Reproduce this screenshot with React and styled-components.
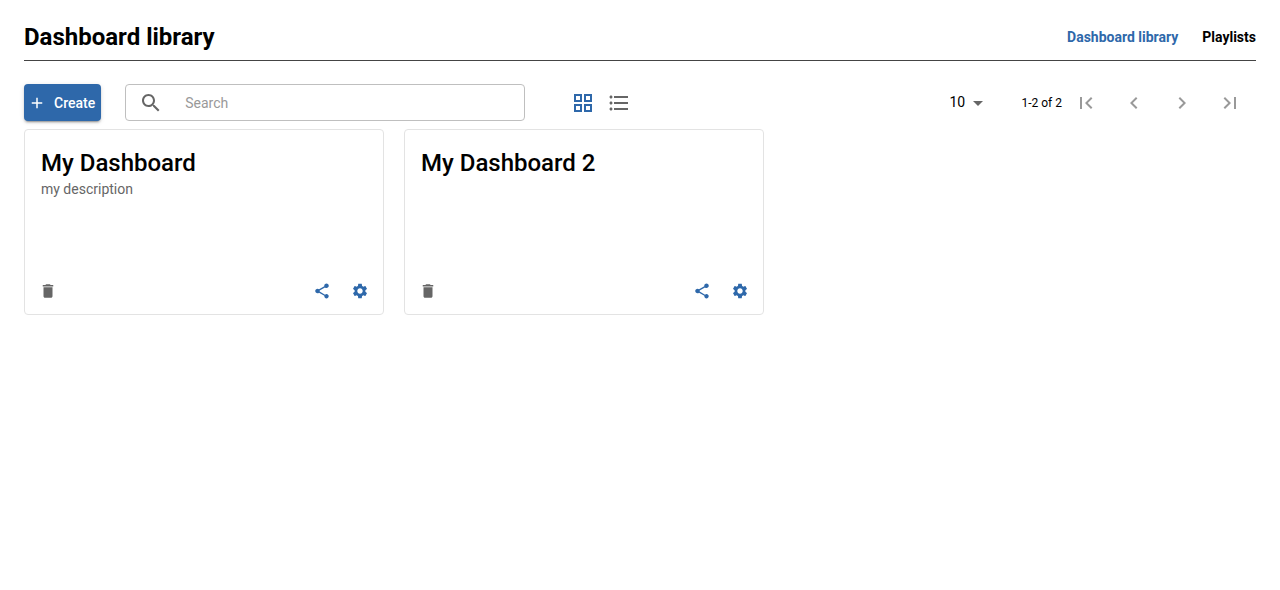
import React from "react";
import styled, { createGlobalStyle } from "styled-components";

const GlobalStyle = createGlobalStyle`
  *, *::before, *::after { box-sizing: border-box; }
  body {
    margin: 0;
    background: #fff;
    color: #000;
    font-family: Roboto, "Liberation Sans", sans-serif;
    font-size: 14px;
  }
  button, input, select { font: inherit; }
`;

const blue = "#2e68aa";
const gray = "#666";

const paths = {
  add: "M19 13h-6v6h-2v-6H5v-2h6V5h2v6h6v2z",
  search:
    "M15.5 14h-.79l-.28-.27C15.41 12.59 16 11.11 16 9.5 16 5.91 13.09 3 9.5 3S3 5.91 3 9.5 5.91 16 9.5 16c1.61 0 3.09-.59 4.23-1.57l.27.28v.79l5 4.99L20.49 19l-4.99-5zm-6 0C7.01 14 5 11.99 5 9.5S7.01 5 9.5 5 14 7.01 14 9.5 11.99 14 9.5 14z",
  grid: "M3 3v8h8V3H3zm6 6H5V5h4v4zm-6 4v8h8v-8H3zm6 6H5v-4h4v4zm4-16v8h8V3h-8zm6 6h-4V5h4v4zm-6 4v8h8v-8h-8zm6 6h-4v-4h4v4z",
  list: "M4 10.5c-.83 0-1.5.67-1.5 1.5s.67 1.5 1.5 1.5 1.5-.67 1.5-1.5-.67-1.5-1.5-1.5zm0-6c-.83 0-1.5.67-1.5 1.5S3.17 7.5 4 7.5 5.5 6.83 5.5 6 4.83 4.5 4 4.5zm0 12c-.83 0-1.5.68-1.5 1.5s.68 1.5 1.5 1.5 1.5-.68 1.5-1.5-.67-1.5-1.5-1.5zM7 19h14v-2H7v2zm0-6h14v-2H7v2zm0-8v2h14V5H7z",
  dropDown: "m7 10 5 5 5-5z",
  first: "M18.41 16.59 13.82 12l4.59-4.59L17 6l-6 6 6 6zM6 6h2v12H6z",
  previous: "M15.41 7.41 14 6l-6 6 6 6 1.41-1.41L10.83 12z",
  next: "M10 6 8.59 7.41 13.17 12l-4.58 4.59L10 18l6-6z",
  last: "M5.59 7.41 10.18 12l-4.59 4.59L7 18l6-6-6-6zM16 6h2v12h-2z",
  trash: "M6 19c0 1.1.9 2 2 2h8c1.1 0 2-.9 2-2V7H6v12zM19 4h-3.5l-1-1h-5l-1 1H5v2h14V4z",
  share:
    "M18 16.08c-.76 0-1.44.3-1.96.77L8.91 12.7c.05-.23.09-.46.09-.7s-.04-.47-.09-.7l7.05-4.11c.54.5 1.25.81 2.04.81 1.66 0 3-1.34 3-3s-1.34-3-3-3-3 1.34-3 3c0 .24.04.47.09.7L8.04 9.81C7.5 9.31 6.79 9 6 9c-1.66 0-3 1.34-3 3s1.34 3 3 3c.79 0 1.5-.31 2.04-.81l7.12 4.16c-.05.21-.08.43-.08.65 0 1.61 1.31 2.92 2.92 2.92s2.92-1.31 2.92-2.92-1.31-2.92-2.92-2.92z",
  settings:
    "M19.14 12.94c.04-.3.06-.61.06-.94 0-.32-.02-.64-.07-.94l2.03-1.58c.18-.14.23-.41.12-.61l-1.92-3.32c-.12-.22-.37-.29-.59-.22l-2.39.96c-.5-.38-1.03-.7-1.62-.94l-.36-2.54c-.04-.24-.24-.41-.48-.41h-3.84c-.24 0-.43.17-.47.41l-.36 2.54c-.59.24-1.13.57-1.62.94l-2.39-.96c-.22-.08-.47 0-.59.22L2.74 8.87c-.12.21-.08.47.12.61l2.03 1.58c-.05.3-.09.63-.09.94s.02.64.07.94l-2.03 1.58c-.18.14-.23.41-.12.61l1.92 3.32c.12.22.37.29.59.22l2.39-.96c.5.38 1.03.7 1.62.94l.36 2.54c.05.24.24.41.48.41h3.84c.24 0 .44-.17.47-.41l.36-2.54c.59-.24 1.13-.56 1.62-.94l2.39.96c.22.08.47 0 .59-.22l1.92-3.32c.12-.22.07-.47-.12-.61l-2.01-1.58zM12 15.6c-1.98 0-3.6-1.62-3.6-3.6s1.62-3.6 3.6-3.6 3.6 1.62 3.6 3.6-1.62 3.6-3.6 3.6z",
};

const Svg = styled.svg`
  display: block;
  flex: none;
  fill: currentColor;
`;

function Icon({ name, size = 24 }) {
  return (
    <Svg viewBox="0 0 24 24" width={size} height={size} aria-hidden="true">
      <path d={paths[name]} />
    </Svg>
  );
}

const Page = styled.div`
  padding: 20px 24px;
`;

const Header = styled.header`
  display: flex;
  align-items: center;
  justify-content: space-between;
  height: 41px;
  padding-bottom: 6px;
  border-bottom: 1px solid #444;
`;

const Title = styled.h1`
  margin: 0;
  font-size: 24px;
  line-height: 32px;
  font-weight: 700;
`;

const Nav = styled.nav`
  display: flex;
  gap: 24px;
`;

const NavLink = styled.a`
  color: ${(p) => (p.$active ? blue : "#000")};
  font-weight: 700;
  line-height: 20px;
  text-decoration: none;
`;

const Toolbar = styled.div`
  display: flex;
  align-items: center;
  margin: 23px 0 8px;
`;

const CreateButton = styled.button`
  display: flex;
  align-items: center;
  gap: 8px;
  height: 37px;
  padding: 0 6px 0 4px;
  border: 0;
  border-radius: 4px;
  background: ${blue};
  color: #fff;
  font-weight: 500;
  box-shadow: 0 3px 1px -2px rgba(0, 0, 0, 0.2), 0 2px 2px 0 rgba(0, 0, 0, 0.14),
    0 1px 5px 0 rgba(0, 0, 0, 0.12);
  cursor: pointer;
`;

const SearchBox = styled.label`
  display: flex;
  align-items: center;
  flex: 0 1 400px;
  height: 37px;
  margin-left: 24px;
  padding: 0 13px;
  gap: 22px;
  border: 1px solid #bfbfbf;
  border-radius: 4px;
  color: ${gray};
`;

const SearchInput = styled.input`
  flex: 1;
  min-width: 0;
  padding: 0;
  border: 0;
  outline: 0;
  background: none;
  color: #000;
  &::placeholder {
    color: #999;
    opacity: 1;
  }
`;

const IconButton = styled.button`
  display: flex;
  align-items: center;
  justify-content: center;
  width: ${(p) => p.$size}px;
  height: ${(p) => p.$size}px;
  padding: 0;
  border: 0;
  background: none;
  color: ${(p) => p.$color};
  cursor: pointer;
`;

const ViewModes = styled.div`
  display: flex;
  margin-left: 40px;
`;

const Pagination = styled.div`
  display: flex;
  align-items: center;
  height: 37px;
  margin-left: auto;
  padding-right: 2px;
`;

const PageSize = styled.div`
  display: grid;
  align-items: center;
  width: 41px;
  color: ${gray};
  > * {
    grid-area: 1 / 1;
  }
  > svg {
    justify-self: end;
    pointer-events: none;
  }
`;

const PageSizeSelect = styled.select`
  appearance: none;
  width: 100%;
  height: 24px;
  padding: 0 24px 2px 0;
  border: 0;
  background: none;
  color: #000;
`;

const Range = styled.span`
  margin-left: 31px;
  font-size: 12px;
`;

const PageButtons = styled.div`
  display: flex;
`;

const Cards = styled.main`
  display: grid;
  grid-template-columns: repeat(auto-fill, 360px);
  gap: 20px;
`;

const Card = styled.article`
  display: flex;
  flex-direction: column;
  min-height: 186px;
  padding: 16px 8px 8px;
  border: 1px solid #e3e3e3;
  border-radius: 4px;
`;

const CardTitle = styled.h2`
  margin: 0;
  padding: 0 8px;
  font-size: 24px;
  line-height: 34px;
  font-weight: 500;
`;

const Description = styled.p`
  margin: 0;
  padding: 0 8px;
  color: ${gray};
  line-height: 18px;
`;

const CardActions = styled.div`
  display: flex;
  justify-content: space-between;
  margin-top: auto;
`;

const ActionGroup = styled.div`
  display: flex;
  gap: 8px;
`;

const dashboards = [
  { name: "My Dashboard", description: "my description" },
  { name: "My Dashboard 2" },
];

function DashboardCard({ name, description }) {
  return (
    <Card>
      <CardTitle>{name}</CardTitle>
      {description && <Description>{description}</Description>}
      <CardActions>
        <IconButton $size={30} $color={gray} aria-label="Delete">
          <Icon name="trash" size={18} />
        </IconButton>
        <ActionGroup>
          <IconButton $size={30} $color={blue} aria-label="Share">
            <Icon name="share" size={18} />
          </IconButton>
          <IconButton $size={30} $color={blue} aria-label="Settings">
            <Icon name="settings" size={18} />
          </IconButton>
        </ActionGroup>
      </CardActions>
    </Card>
  );
}

export default function App() {
  return (
    <Page>
      <GlobalStyle />
      <Header>
        <Title>Dashboard library</Title>
        <Nav>
          <NavLink href="#library" $active>Dashboard library</NavLink>
          <NavLink href="#playlists">Playlists</NavLink>
        </Nav>
      </Header>
      <Toolbar>
        <CreateButton type="button">
          <Icon name="add" size={18} />
          Create
        </CreateButton>
        <SearchBox>
          <Icon name="search" />
          <SearchInput type="text" placeholder="Search" aria-label="Search" />
        </SearchBox>
        <ViewModes>
          <IconButton $size={36} $color={blue} aria-label="Cards view">
            <Icon name="grid" />
          </IconButton>
          <IconButton $size={36} $color={gray} aria-label="List view">
            <Icon name="list" />
          </IconButton>
        </ViewModes>
        <Pagination>
          <PageSize>
            <PageSizeSelect aria-label="Rows per page" defaultValue="10">
              <option>10</option>
              <option>20</option>
              <option>50</option>
            </PageSizeSelect>
            <Icon name="dropDown" />
          </PageSize>
          <Range>1-2 of 2</Range>
          <PageButtons>
            {["first", "previous", "next", "last"].map((name) => (
              <IconButton key={name} $size={48} $color="#999" aria-label={`${name} page`} disabled>
                <Icon name={name} />
              </IconButton>
            ))}
          </PageButtons>
        </Pagination>
      </Toolbar>
      <Cards>
        {dashboards.map((d) => (
          <DashboardCard key={d.name} {...d} />
        ))}
      </Cards>
    </Page>
  );
}
